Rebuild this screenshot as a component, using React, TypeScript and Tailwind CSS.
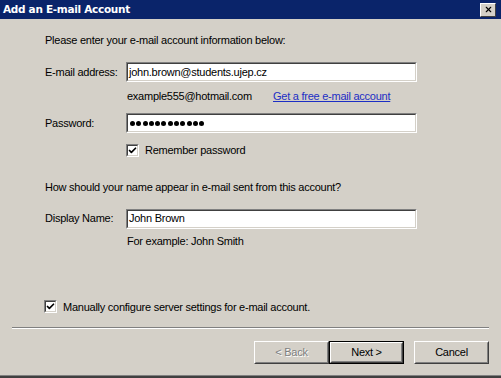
import { Check, X } from 'lucide-react';

const sunken =
  'border border-t-[#808080] border-l-[#808080] border-b-white border-r-white';

function Field({ value, password = false }: { value: string; password?: boolean }) {
  return (
    <div className={`w-[291px] h-[20px] shrink-0 ${sunken}`}>
      <div className="h-full border border-t-[#404040] border-l-[#404040] border-b-[#d4d0c8] border-r-[#d4d0c8] bg-white flex items-center px-[1px]">
        {password ? (
          <span className="flex gap-[1.3px] pl-[1px]">
            {Array.from({ length: 12 }).map((_, i) => (
              <span key={i} className="w-[5px] h-[5px] rounded-full bg-black" />
            ))}
          </span>
        ) : (
          <span className="leading-none">{value}</span>
        )}
      </div>
    </div>
  );
}

function CheckBox() {
  return (
    <span className={`w-[13px] h-[13px] shrink-0 ${sunken}`}>
      <span className="w-full h-full flex items-center justify-center bg-white border border-t-[#404040] border-l-[#404040] border-b-[#d4d0c8] border-r-[#d4d0c8]">
        <Check className="w-[9px] h-[9px]" strokeWidth={4.5} />
      </span>
    </span>
  );
}

function Button({
  label,
  disabled = false,
  isDefault = false,
}: {
  label: string;
  disabled?: boolean;
  isDefault?: boolean;
}) {
  const inner = (
    <div className="h-full border border-t-white border-l-white border-b-[#404040] border-r-[#404040]">
      <div
        className={`h-full flex items-center justify-center border border-t-transparent border-l-transparent border-b-[#808080] border-r-[#808080] ${
          disabled ? 'text-[#808080] [text-shadow:1px_1px_0_#fff]' : 'text-black'
        }`}
      >
        {label}
      </div>
    </div>
  );
  return (
    <div className={`w-[75px] h-[23px] ${isDefault ? 'border border-black' : ''}`}>{inner}</div>
  );
}

export default function App() {
  return (
    <div
      className="w-[501px] h-[378px] bg-[#d4d0c8] flex flex-col text-[11px] tracking-[-0.25px] text-black whitespace-nowrap"
      style={{ fontFamily: '"Liberation Sans", Arial, sans-serif' }}
    >
      <div className="h-[19px] shrink-0 bg-[#0a246a] flex items-center justify-between pl-[3px] pr-[5px]">
        <span
          className="text-white font-bold text-[10.5px] tracking-[-0.3px]"
          style={{ fontFamily: '"DejaVu Sans", Tahoma, sans-serif' }}
        >
          Add an E-mail Account
        </span>
        <span className="w-[16px] h-[14px] bg-[#d4d0c8] border border-t-white border-l-white border-b-[#404040] border-r-[#404040] flex items-center justify-center">
          <X className="w-[9px] h-[9px]" strokeWidth={3} />
        </span>
      </div>

      <div className="flex-1 flex flex-col pl-[45px] pt-[15px]">
        <div className="h-[12px] leading-[12px]">Please enter your e-mail account information below:</div>

        <div className="mt-[16px] flex items-center">
          <span className="w-[81px] shrink-0">E-mail address:</span>
          <Field value="john.brown@students.ujep.cz" />
        </div>

        <div className="mt-[7px] flex items-center h-[14px] pl-[82px]">
          <span className="w-[146px] shrink-0">example555@hotmail.com</span>
          <span className="underline text-[#1c2ec5]">Get a free e-mail account</span>
        </div>

        <div className="mt-[10px] flex items-center">
          <span className="w-[81px] shrink-0">Password:</span>
          <Field value="" password />
        </div>

        <div className="mt-[9px] flex items-center gap-[6px] pl-[81px]">
          <CheckBox />
          <span>Remember password</span>
        </div>

        <div className="mt-[21px] h-[14px] leading-[14px]">
          How should your name appear in e-mail sent from this account?
        </div>

        <div className="mt-[15px] flex items-center">
          <span className="w-[81px] shrink-0">Display Name:</span>
          <Field value="John Brown" />
        </div>

        <div className="mt-[5px] h-[14px] leading-[14px] pl-[82px]">For example: John Smith</div>

        <div className="mt-[51px] flex items-center gap-[6px] -ml-[1px]">
          <CheckBox />
          <span>Manually configure server settings for e-mail account.</span>
        </div>
      </div>

      <div className="mx-[12px] border-t border-t-[#808080] border-b border-b-white" />

      <div className="flex justify-end pr-[12px] pt-[12px] pb-[11px]">
        <Button label="< Back" disabled />
        <Button label="Next >" isDefault />
        <div className="w-[10px]" />
        <Button label="Cancel" />
      </div>
      <div className="h-[3px] shrink-0 bg-[#404040] border-t border-t-[#808080]" />
    </div>
  );
}
